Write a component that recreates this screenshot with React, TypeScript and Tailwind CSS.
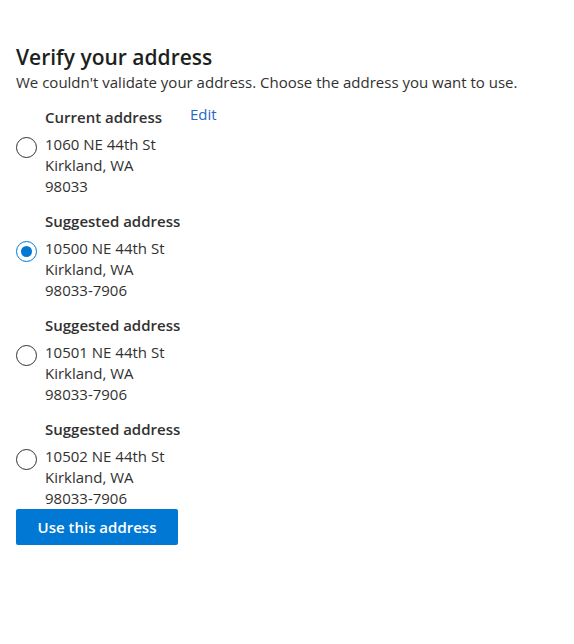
import { useState } from 'react'

const options = [
  { id: 'current', label: 'Current address', lines: ['1060 NE 44th St', 'Kirkland, WA', '98033'], editable: true },
  { id: 's1', label: 'Suggested address', lines: ['10500 NE 44th St', 'Kirkland, WA', '98033-7906'] },
  { id: 's2', label: 'Suggested address', lines: ['10501 NE 44th St', 'Kirkland, WA', '98033-7906'] },
  { id: 's3', label: 'Suggested address', lines: ['10502 NE 44th St', 'Kirkland, WA', '98033-7906'] },
]

export default function App() {
  const [selected, setSelected] = useState('s1')

  return (
    <div className="min-h-screen bg-white px-4 pt-[43px] font-['Open_Sans',sans-serif] text-[#323130]">
      <h1 className="text-[21px] leading-[28px] font-semibold text-[#201f1e]">Verify your address</h1>
      <p className="mt-[1px] text-[15px] leading-[21px]">
        We couldn't validate your address. Choose the address you want to use.
      </p>

      <div className="mt-[14px] flex flex-col gap-[14px]">
        {options.map(opt => {
          const isSelected = selected === opt.id
          return (
            <div key={opt.id}>
              <div className="flex items-start pl-[29px]">
                <p className="w-[145px] text-[15px] leading-[21px] font-semibold">{opt.label}</p>
                {opt.editable && (
                  <button className="-mt-[3px] text-[15px] leading-[21px] text-[#2b66c8] hover:underline">Edit</button>
                )}
              </div>
              <label className="mt-[6px] flex cursor-pointer items-start">
                <input
                  type="radio"
                  name="address"
                  className="sr-only"
                  checked={isSelected}
                  onChange={() => setSelected(opt.id)}
                />
                <span
                  className={`mt-[3px] mr-[8px] flex h-[21px] w-[21px] shrink-0 items-center justify-center rounded-full border ${
                    isSelected ? 'border-[#0078d4]' : 'border-[#323130]'
                  }`}
                >
                  {isSelected && <span className="h-[11px] w-[11px] rounded-full bg-[#0078d4]" />}
                </span>
                <span className="text-[15px] leading-[21px]">
                  {opt.lines.map(line => (
                    <span key={line} className="block">{line}</span>
                  ))}
                </span>
              </label>
            </div>
          )
        })}
      </div>

      <button className="h-[36px] w-[162px] rounded-[2px] bg-[#0078d4] text-[15px] font-semibold text-white hover:bg-[#106ebe]">
        Use this address
      </button>
    </div>
  )
}
